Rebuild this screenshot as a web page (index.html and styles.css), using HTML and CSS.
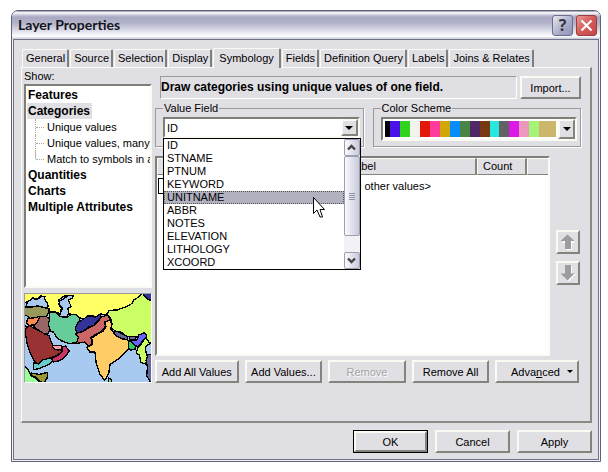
FILE: index.html
```html
<!DOCTYPE html>
<html lang="en">
<head>
<meta charset="utf-8">
<title>Layer Properties</title>
<link rel="stylesheet" href="styles.css">
</head>
<body>
<main class="window">
  <header class="titlebar">
    <h1>Layer Properties</h1>
    <button class="caption help" type="button" aria-label="Help">?</button>
    <button class="caption close" type="button" aria-label="Close">
      <svg viewBox="0 0 13 13" width="13" height="13"><path d="M1.500 1.500 11.500 11.500M11.500 1.500 1.500 11.500" stroke="#fff" stroke-width="2.200" fill="none"/></svg>
    </button>
  </header>
  <div class="client">
    <div class="tabs" role="tablist">
      <button type="button" role="tab">General</button>
      <button type="button" role="tab">Source</button>
      <button type="button" role="tab">Selection</button>
      <button type="button" role="tab">Display</button>
      <button type="button" role="tab" class="active" aria-selected="true">Symbology</button>
      <button type="button" role="tab">Fields</button>
      <button type="button" role="tab">Definition Query</button>
      <button type="button" role="tab">Labels</button>
      <button type="button" role="tab">Joins &amp; Relates</button>
    </div>
    <section class="panel" role="tabpanel">
      <div class="side">
        <h2 id="show">Show:</h2>
        <ul class="tree sunken" aria-labelledby="show">
          <li><b>Features</b></li>
          <li><b class="selected">Categories</b>
            <ul>
              <li>Unique values</li>
              <li>Unique values, many fields</li>
              <li>Match to symbols in a style</li>
            </ul>
          </li>
          <li><b>Quantities</b></li>
          <li><b>Charts</b></li>
          <li><b>Multiple Attributes</b></li>
        </ul>
        <svg class="map" viewBox="43 38 384 267" preserveAspectRatio="none" role="img" aria-label="Map preview">
          <rect x="43" y="38" width="384" height="267" fill="#a8caf0"/>
          <g stroke="#000" stroke-width="4" stroke-linejoin="round">
            <path fill="#ffff66" d="M40 35H400L388 48 374 56 370 66 354 76 340 80 326 86 300 88 294 98 300 108 290 102 274 98 262 106 238 104 222 114 206 108 200 100 184 100 172 96 174 108 152 108 150 96 154 82 148 72 150 60 164 56 172 44 162 44 146 56 148 68 156 84 150 98 136 92 118 92 108 82 112 72 106 58 98 48 88 46 78 54 66 48 58 60 48 62 40 66Z"/>
            <path fill="#a8caf0" d="M46 76 50 62 62 54 66 48 76 56 88 50 90 44 104 46 102 54 110 64 114 76 104 80 82 74 64 78ZM148 106 152 94 158 80 146 68 150 58 162 52 176 42 190 42 188 50 176 56 178 64 184 76 174 82 176 96 170 108Z"/>
            <path fill="#99995c" d="M40 80 64 78 82 74 104 80 116 82 116 94 108 106 88 106 72 110 58 112 48 104 40 104Z"/>
            <path fill="#ff8c4c" d="M50 114 72 110 88 106 84 120 74 130 56 134 48 128Z"/>
            <path fill="#996666" d="M88 106 108 106 118 114 114 130 120 144 114 158 104 160 84 148 68 136 78 128Z"/>
            <path fill="#e66ac8" d="M40 134 52 138 56 144 48 154 40 150Z"/>
            <path fill="#66cc99" d="M118 94 136 94 150 106 170 110 184 100 198 100 210 110 208 124 198 138 200 158 208 168 202 186 176 188 154 180 140 170 130 154 120 150 114 130 118 114Z"/>
            <path fill="#333399" d="M204 124 222 114 234 104 258 108 274 98 274 110 262 122 252 134 236 138 220 152 202 156 196 142Z"/>
            <path fill="#cc6666" d="M196 158 220 152 238 140 252 134 268 118 276 108 294 102 302 112 300 120 286 122 288 136 276 152 260 160 244 170 248 190 236 196 224 184 200 188 206 168Z"/>
            <path fill="#ccff66" d="M430 35H400L388 48 374 56 370 66 354 76 340 80 326 86 300 88 292 98 304 112 308 128 306 140 320 152 338 154 352 166 376 168 396 166 404 156 414 164 412 178 430 190Z"/>
            <path fill="#333399" d="M404 35H430V58L416 54 404 42Z"/>
            <path fill="#ffcc66" d="M286 122 302 118 308 130 304 144 316 156 330 168 352 176 360 180 358 206 344 220 326 236 302 252 298 280 286 300 272 282 260 248 256 214 240 214 232 200 250 190 246 172 264 160 282 150 290 136Z"/>
            <path fill="#666699" d="M316 150 330 154 344 162 356 168 354 176 338 174 322 166 314 158ZM362 166 382 168 380 176 362 176Z"/>
            <path fill="#33cc66" d="M360 180 372 184 380 194 378 206 364 208 358 200Z"/>
            <path fill="#6666ff" d="M364 180 384 178 390 162 408 156 414 166 400 182 388 198 378 194Z"/>
            <path fill="#ccff66" d="M388 200 402 184 410 170 424 188 410 198 412 216 418 236 410 250 396 246 392 224 382 216Z"/>
            <path fill="#666699" d="M430 222H418L412 240 416 258 414 286 424 304H430Z"/>
            <path fill="#993333" d="M44 146 56 134 84 148 104 160 116 164 122 182 130 198 150 206 156 212 138 226 120 232 98 238 82 250 72 242 58 216 50 190 46 170Z"/>
            <path fill="#ff99aa" d="M126 194 154 194 158 204 144 208 130 204Z"/>
            <path fill="#cc3366" d="M156 198 166 196 178 210 166 228 150 240 130 244 124 234 148 222 156 212Z"/>
            <path fill="#66cccc" d="M68 246 84 250 98 238 122 232 128 242 112 254 86 264 70 268Z"/>
            <path fill="#99ff99" d="M40 254 52 268 62 286 76 294 88 308H40Z"/>
            <path fill="#999933" d="M62 278 86 282 112 276 110 294 100 308 86 302 74 290 62 286Z"/>
            <path fill="#66cc99" d="M298 292 306 298 308 308H296Z"/>
          </g>
        </svg>
      </div>
      <div class="main">
        <div class="top">
          <p class="heading">Draw categories using unique values of one field.</p>
          <button type="button" class="btn">Import...</button>
        </div>
        <div class="groups">
          <fieldset>
            <legend><label for="field">Value Field</label></legend>
            <div class="combo sunken">
              <select id="field"><option>ID</option></select>
              <span class="drop" aria-hidden="true"></span>
              <div class="popup">
                <ul role="listbox" aria-label="Value Field">
                  <li role="option">ID</li>
                  <li role="option">STNAME</li>
                  <li role="option">PTNUM</li>
                  <li role="option">KEYWORD</li>
                  <li role="option" class="hover" aria-selected="true">UNITNAME</li>
                  <li role="option">ABBR</li>
                  <li role="option">NOTES</li>
                  <li role="option">ELEVATION</li>
                  <li role="option">LITHOLOGY</li>
                  <li role="option">XCOORD</li>
                </ul>
                <div class="scroll" aria-hidden="true">
                  <span class="arrow"><svg viewBox="0 0 9 7" width="9" height="7"><path d="M1 5.500 4.500 2 8 5.500" fill="none" stroke="#444" stroke-width="2.400"/></svg></span>
                  <span class="thumb"><i></i><i></i><i></i><i></i></span>
                  <span class="arrow end"><svg viewBox="0 0 9 7" width="9" height="7"><path d="M1 1.500 4.500 5 8 1.500" fill="none" stroke="#444" stroke-width="2.400"/></svg></span>
                </div>
                <svg class="pointer" viewBox="0 0 12 21" width="12" height="21"><path d="M.5.5V16.500L4 13 7 20H9.500L7 12.500H11.500Z" fill="#fff" stroke="#000"/></svg>
              </div>
            </div>
          </fieldset>
          <fieldset>
            <legend>Color Scheme</legend>
            <button type="button" class="combo scheme sunken" aria-label="Color Scheme">
              <span class="ramp"><i class="c1"></i><i class="c2"></i><i class="c3"></i><i class="c4"></i><i class="c5"></i><i class="c6"></i><i class="c7"></i><i class="c8"></i><i class="c9"></i><i class="c10"></i><i class="c11"></i><i class="c12"></i><i class="c13"></i><i class="c14"></i><i class="c15"></i><i class="c16"></i><i class="c17"></i></span>
              <span class="drop"></span>
            </button>
          </fieldset>
        </div>
        <div class="listing">
          <div class="grid sunken">
            <table>
              <thead><tr><th class="symbol"></th><th class="value"></th><th>Label</th><th class="count">Count</th><th class="rest"></th></tr></thead>
              <tbody><tr><td><span class="swatch"></span></td><td></td><td>&lt;all other values&gt;</td><td></td><td></td></tr></tbody>
            </table>
          </div>
          <div class="order">
            <button type="button" class="btn" aria-label="Move up"><svg viewBox="0 0 16 16" width="16" height="16"><path d="M8 2 15 9H12V16H6V9H2Z" fill="#fff"/><path d="M7.500.500 14.500 7H11V15H5V7H.500Z" fill="#9b9ba0"/></svg></button>
            <button type="button" class="btn" aria-label="Move down"><svg viewBox="0 0 16 16" width="16" height="16"><path d="M6 1H12V9H16L9 16H7L1 9H6Z" fill="#fff"/><path d="M5 0H11V8.500H14.500L7.500 15.500.500 8.500H5Z" fill="#9b9ba0"/></svg></button>
          </div>
        </div>
        <div class="actions">
          <button type="button" class="btn">Add All Values</button>
          <button type="button" class="btn">Add Values...</button>
          <button type="button" class="btn" disabled>Remove</button>
          <button type="button" class="btn">Remove All</button>
          <button type="button" class="btn menu"><span>Adva<u>n</u>ced</span></button>
        </div>
      </div>
    </section>
    <footer>
      <button type="button" class="btn default">OK</button>
      <button type="button" class="btn">Cancel</button>
      <button type="button" class="btn">Apply</button>
    </footer>
  </div>
</main>
</body>
</html>
```
FILE: styles.css
```css
* { box-sizing: border-box; }
body {
  margin: 0;
  padding: 10px 7px 10px 11px;
  min-height: 100vh;
  display: flex;
  background: #fff;
  color: #000;
  font: 11px/16px "Liberation Sans", sans-serif;
}
button, select { font: inherit; color: inherit; margin: 0; }
h1, h2, p, ul { margin: 0; padding: 0; }
ul { list-style: none; }

.window {
  flex: 1;
  display: flex;
  flex-direction: column;
  min-width: 0;
  border: 1px solid #5f6376;
  border-radius: 7px 7px 0 0;
  background: #e0dfe4;
  box-shadow: inset 0 0 0 1px #f2f2f6;
}
.titlebar {
  display: flex;
  align-items: center;
  gap: 3px;
  height: 28px;
  padding: 0 3px 0 6px;
  border-radius: 6px 6px 0 0;
  background: linear-gradient(#8788a0, #fff 6%, #c8c9da 14%, #a8a9c2 22%, #b4b5cb 45%, #e4e4ee 75%, #fff 90%, #c6c7d6);
}
.titlebar h1 {
  flex: 1;
  font: bold 14px/18px Lato, sans-serif;
  color: #14141c;
}
.caption {
  display: flex;
  align-items: center;
  justify-content: center;
  width: 21px;
  height: 21px;
  padding: 0;
  border: 1px solid #6a6d8c;
  border-radius: 3px;
}
.help {
  background: linear-gradient(135deg, #e8e9f3, #a8abc6 60%, #9295b4);
  font: bold 16px/18px "Open Sans", sans-serif;
  color: #33343f;
}
.close { border-color: #9c3c3c; background: linear-gradient(135deg, #e99a98, #d45a58 50%, #c44a4a); }

.client {
  flex: 1;
  display: flex;
  flex-direction: column;
  margin: 0 1px 1px;
  padding: 7px 6px 6px 7px;
  border: 1px solid #70738c;
}
.tabs { display: flex; align-items: flex-end; height: 20px; padding-left: 1px; }
.tabs button {
  height: 18px;
  padding: 0 2px 0 3px;
  border: 1px solid #fbfbf4;
  border-right: 2px solid #7f7e7c;
  border-bottom: 0;
  border-radius: 2px 2px 0 0;
  margin-right: 1px;
  background: #e0dfe4;
  line-height: 17px;
  white-space: nowrap;
}
.tabs .active { height: 20px; padding: 0 5px; margin-bottom: -1px; line-height: 17px; z-index: 1; }

.panel {
  flex: 1;
  display: flex;
  gap: 3px;
  padding: 0 9px 38px 2px;
  border: 1px solid #fbfbf4;
  border-right: 2px solid #8a8984;
  border-bottom: 2px solid #8a8984;
}
.sunken {
  border: 2px solid;
  border-color: #7f7e78 #fbfbf4 #fbfbf4 #7f7e78;
  background: #fff;
}
.side { width: 128px; display: flex; flex-direction: column; }
.side h2 { font: inherit; }
.tree { flex: 1; overflow: hidden; padding: 1px; }
.tree li { white-space: nowrap; }
.tree b { font: bold 12px/16px "Liberation Sans", sans-serif; display: inline-block; padding: 0 2px 0 1px; vertical-align: top; }
.selected { background: #e0dfe4; }
.tree ul { margin-left: 8px; }
.tree ul li { display: flex; align-items: center; border-left: 1px dotted #a9a89c; }
.tree ul li::before { content: ""; flex: none; width: 8px; margin-right: 3px; border-top: 1px dotted #a9a89c; }
.tree ul li:last-child { border-image: linear-gradient(#b9b8ac 50%, transparent 50%) 1; }
.map { height: 90px; width: 100%; margin-top: 5px; border: 1px solid; border-color: #9b9b9b #fff #fff #9b9b9b; shape-rendering: crispEdges; }

.main { flex: 1; min-width: 0; display: flex; flex-direction: column; padding-top: 8px; }
.btn {
  height: 23px;
  padding: 0 4px;
  border: 2px solid;
  border-color: #fbfbf4 #84837d #84837d #fbfbf4;
  background: #e0dfe4;
  white-space: nowrap;
  line-height: 18px;
}
.btn:disabled { color: #a3a2a6; text-shadow: 1px 1px #fff; }
.top { display: flex; gap: 3px; padding-left: 5px; }
.heading {
  flex: 1;
  border: 1px solid;
  border-color: #9b9b9f #fff #fff #9b9b9f;
  font: bold 12px/21px "Liberation Sans", sans-serif;
  white-space: nowrap;
}
.top .btn { width: 61px; }
.groups { display: flex; gap: 9px; margin-top: 1px; }
fieldset {
  flex: 1;
  min-width: 0;
  margin: 0;
  padding: 1px 3px 5px 7px;
  border: 1px solid #9b9b9f;
  box-shadow: 1px 1px #fff;
}
legend { padding: 0 1px; line-height: 16px; }
.combo { position: relative; display: flex; width: 100%; height: 21px; }
.combo select {
  flex: 1;
  appearance: none;
  border: 0;
  background: none;
  padding: 0 2px;
}
.drop {
  display: flex;
  align-items: center;
  justify-content: center;
  width: 17px;
  border: 2px solid;
  border-color: #fbfbf4 #84837d #84837d #fbfbf4;
  background: #e0dfe4;
}
.drop::before, .menu::after { content: ""; border: 4px solid transparent; border-top-color: #000; border-bottom: 0; }
.scheme { height: 24px; padding: 0; }
.ramp { flex: 1; display: flex; padding: 2px; }
.ramp i { flex: 10; }
.ramp .c1 { flex: 6; background: #000; }
.c2 { background: #4a12e8; }
.c3 { background: #30d41c; }
.c4 { background: #f3f3ee; }
.c5 { background: #e21808; }
.c6 { background: #ff3c9c; }
.c7 { background: #d2a606; }
.c8 { background: #068cff; }
.c9 { background: #4a8444; }
.c10 { background: #502866; }
.c11 { background: #783810; }
.c12 { background: #26e8de; }
.c13 { background: #626264; }
.c14 { background: #dc18e8; }
.c15 { background: #ec98bc; }
.c16 { background: #a4f478; }
.ramp .c17 { flex: 17; background: #ccb66c; }

.popup {
  position: absolute;
  z-index: 2;
  top: 19px;
  left: -2px;
  right: -3px;
  display: flex;
  border: 1px solid #000;
  background: #fff;
}
.popup ul { flex: 1; }
.popup li { height: 13px; padding-left: 3px; line-height: 13px; }
.popup .hover { background: #b1b1c0; outline: 1px dotted #555; outline-offset: -1px; }
.scroll { width: 16px; display: flex; flex-direction: column; background: #f1f1f6; }
.arrow, .thumb {
  display: flex;
  align-items: center;
  justify-content: center;
  border: 1px solid #9c9fb4;
  border-radius: 2px;
  background: linear-gradient(90deg, #fafafd, #c8c9da);
}
.arrow { height: 17px; }
.thumb { flex-direction: column; gap: 1px; height: 80px; }
.thumb i { width: 6px; height: 1px; background: #9092a8; }
.end { margin-top: auto; }
.pointer { position: absolute; left: 149px; top: 58px; }

.listing { flex: 1; display: flex; gap: 6px; margin-top: 9px; padding-right: 1px; }
.grid { flex: 1; min-width: 0; }
table { width: 100%; table-layout: fixed; border-collapse: separate; border-spacing: 0; }
th {
  height: 17px;
  padding: 0 5px;
  border: 1px solid;
  border-color: #fbfbf4 #84837d #84837d #fbfbf4;
  border-right-width: 2px;
  background: #e0dfe4;
  font-weight: normal;
  text-align: left;
  line-height: 15px;
}
th.rest { width: 21px; border-right: 0; }
.symbol { width: 48px; }
.value { width: 138px; }
.count { width: 50px; }
td { padding: 3px 0 0 1px; white-space: nowrap; }
.swatch { display: block; width: 40px; height: 16px; border: 1px solid #000; }
.order { display: flex; flex-direction: column; justify-content: center; gap: 7px; width: 24px; padding-top: 2px; }
.order .btn { width: 24px; height: 24px; padding: 0; display: flex; align-items: center; justify-content: center; }
.actions { display: flex; gap: 6px; margin-top: 4px; padding-right: 2px; }
.actions .btn { flex: 1 1 77px; }
.actions .btn:first-child, .actions .menu { flex-basis: 83px; }
.menu { display: flex; align-items: center; justify-content: flex-end; gap: 7px; }
.menu::after { border-width: 3px 3px 0; }

footer { display: flex; justify-content: flex-end; gap: 7px; margin-top: 7px; }
footer .btn { width: 75px; }
.default { outline: 1px solid #000; outline-offset: -1px; border-width: 3px; line-height: 16px; }
```
